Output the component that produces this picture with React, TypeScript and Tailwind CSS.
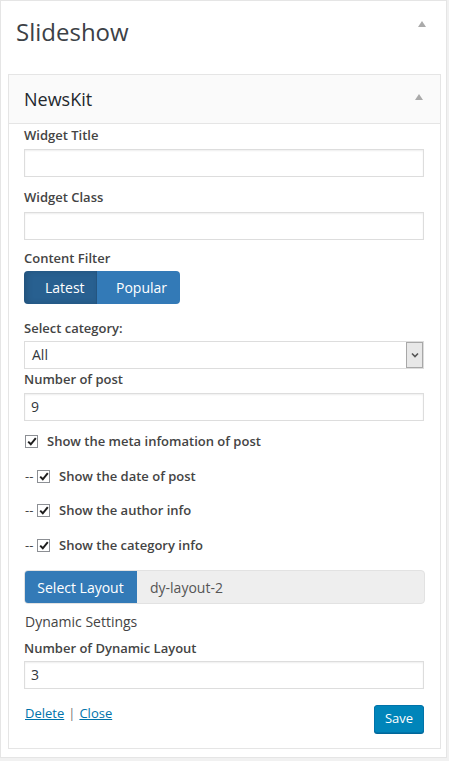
import React from 'react';

const font = { fontFamily: '"Open Sans", "Noto Sans", sans-serif' };

function Arrow() {
  return <span className="block w-0 h-0 border-l-[4px] border-r-[4px] border-b-[6px] border-l-transparent border-r-transparent border-b-[#aaaaaa]" />;
}

function Check() {
  return (
    <span className="flex items-center justify-center w-[13px] h-[13px] border border-[#8c8f94] bg-white shrink-0">
      <svg width="10" height="9" viewBox="0 0 10 9">
        <path d="M1.2 4.6 L3.8 7.3 L8.8 1.2" fill="none" stroke="#1e1e1e" strokeWidth="2" />
      </svg>
    </span>
  );
}

function Label({ text, className }: { text: string; className: string }) {
  return <div className={`h-[18px] leading-[18px] text-[13px] font-semibold text-[#444] ${className}`}>{text}</div>;
}

function TextInput({ value, className }: { value?: string; className: string }) {
  return (
    <div className={`h-[28px] w-[400px] border border-[#dddddd] bg-white shadow-[inset_0_1px_2px_rgba(0,0,0,0.07)] pl-[6px] leading-[26px] text-[14px] text-[#32373c] ${className}`}>
      {value}
    </div>
  );
}

function CheckRow({ text, nested, className }: { text: string; nested?: boolean; className: string }) {
  return (
    <div className={`flex items-center h-[18px] ${className}`}>
      {nested && <span className="text-[13px] text-[#444] w-[13px] pl-[1px] leading-[18px]">--</span>}
      <span className={nested ? '' : 'ml-[1px]'}><Check /></span>
      <span className="ml-[9px] text-[13px] font-semibold text-[#444] leading-[18px]">{text}</span>
    </div>
  );
}

export default function App() {
  return (
    <div className="w-[449px] h-[761px] bg-[#f1f1f1] overflow-hidden" style={font}>
      <div className="w-[447px] h-[758px] bg-white border border-[#e5e5e5] pt-px">
        <div className="flex items-start justify-between h-[72px] pl-[15px] pr-[20px]">
          <h2 className="text-[24px] text-[#3c4146] leading-[30px] mt-[15px]">Slideshow</h2>
          <span className="mt-[19px]"><Arrow /></span>
        </div>
        <div className="ml-[7px] w-[433px] border border-[#e5e5e5]">
          <div className="h-[49px] bg-[#fafafa] border-b border-[#e5e5e5] flex items-center justify-between pl-[15px] pr-[17px]">
            <span className="text-[18px] text-[#23282d] leading-[24px]">NewsKit</span>
            <span className="-mt-[4px]"><Arrow /></span>
          </div>
          <div className="pl-[15px] pr-[16px] pb-[15px]">
            <Label text="Widget Title" className="mt-[2px]" />
            <TextInput className="mt-[5px]" />
            <Label text="Widget Class" className="mt-[11px]" />
            <TextInput className="mt-[6px]" />
            <Label text="Content Filter" className="mt-[9px]" />
            <div className="mt-[4px] flex h-[33px] w-[156px] rounded-[4px] overflow-hidden text-[14px] text-white">
              <div className="w-[73px] bg-[#286090] shadow-[inset_3px_0_6px_rgba(0,0,0,0.15)] flex items-center pl-[21px] border-r border-[#245580]">Latest</div>
              <div className="flex-1 bg-[#337ab7] flex items-center pl-[19px]">Popular</div>
            </div>
            <div className="mt-[15px] h-[18px] leading-[18px] text-[13px] font-semibold text-[#444]">Select category:</div>
            <div className="mt-[4px] h-[28px] w-[400px] border border-[#dddddd] bg-white flex items-center">
              <span className="flex-1 pl-[7px] text-[14px] text-[#32373c] leading-[26px]">All</span>
              <span className="w-[17px] h-[26px] mr-0 bg-[#e8e8e8] border border-[#a8a8a8] flex items-center justify-center">
                <svg width="8" height="6" viewBox="0 0 8 6">
                  <path d="M1 1.5 L4 4.5 L7 1.5" fill="none" stroke="#555" strokeWidth="1.6" />
                </svg>
              </span>
            </div>
            <Label text="Number of post" className="mt-[1px]" />
            <TextInput value="9" className="mt-[5px]" />
            <CheckRow text="Show the meta infomation of post" className="mt-[11px]" />
            <CheckRow nested text="Show the date of post" className="mt-[17px]" />
            <CheckRow nested text="Show the author info" className="mt-[16px]" />
            <CheckRow nested text="Show the category info" className="mt-[17px]" />
            <div className="mt-[16px] flex h-[34px] w-[401px] rounded-[4px] overflow-hidden bg-[#eeeeee] border border-[#e2e2e2] text-[14px]">
              <div className="w-[113px] -ml-px -my-px bg-[#337ab7] text-white flex items-center justify-center">Select Layout</div>
              <div className="pl-[13px] flex items-center text-[#555]">dy-layout-2</div>
            </div>
            <div className="mt-[9px] h-[18px] leading-[18px] text-[14px] text-[#444] pl-px">Dynamic Settings</div>
            <Label text="Number of Dynamic Layout" className="mt-[8px]" />
            <TextInput value="3" className="mt-[4px]" />
            <div className="mt-[15px] flex justify-between items-start w-[400px]">
              <div className="h-[18px] leading-[18px] text-[13px] pl-px">
                <a className="text-[#0073aa] underline">Delete</a>
                <span className="text-[#777] mx-[4px]">|</span>
                <a className="text-[#0073aa] underline">Close</a>
              </div>
              <div className="mt-[1px] h-[28px] w-[50px] rounded-[3px] bg-[#0085ba] border border-[#0073aa] shadow-[0_1px_0_#006799] text-white text-[13px] flex items-center justify-center">Save</div>
            </div>
          </div>
        </div>
      </div>
    </div>
  );
}
